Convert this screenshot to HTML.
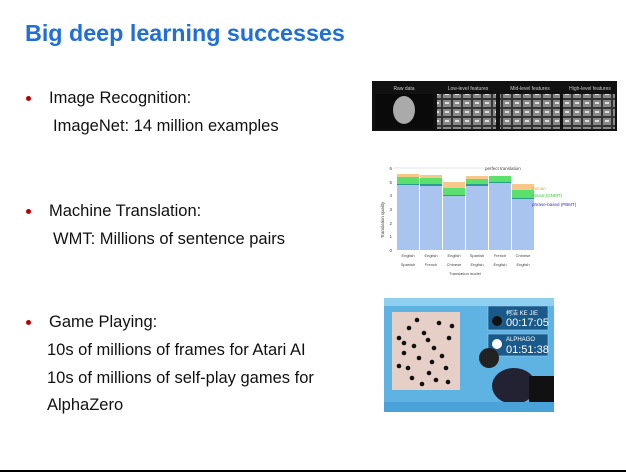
<!DOCTYPE html>
<html><head><style>
body{margin:0;width:626px;height:473px;background:#fff;position:relative;overflow:hidden;font-family:"Liberation Sans",sans-serif}
.t{position:absolute;left:25px;top:20px;font-size:23.3px;font-weight:bold;color:#1e6fd9}
.b{position:absolute;left:26px;width:5px;height:5px;border-radius:50%;background:#c00000}
.x{position:absolute;font-size:16.5px;color:#111;white-space:nowrap}
</style></head><body>
<div class="t">Big deep learning successes</div>
<div class="b" style="top:96px"></div><div class="x" style="left:49px;top:89px">Image Recognition:</div>
<div class="x" style="left:53px;top:117px">ImageNet: 14 million examples</div>
<div class="b" style="top:209px"></div><div class="x" style="left:49px;top:202px">Machine Translation:</div>
<div class="x" style="left:53px;top:230px">WMT: Millions of sentence pairs</div>
<div class="b" style="top:320px"></div><div class="x" style="left:49px;top:313px">Game Playing:</div>
<div class="x" style="left:47px;top:341px">10s of millions of frames for Atari AI</div>
<div class="x" style="left:47px;top:369px">10s of millions of self-play games for</div>
<div class="x" style="left:47px;top:396px">AlphaZero</div>

<svg style="position:absolute;left:372px;top:81px" width="245" height="50">
<defs><pattern id="g" width="10" height="9" patternUnits="userSpaceOnUse"><rect width="10" height="9" fill="#333"/><rect x="1" y="1" width="8" height="7" fill="#888"/><rect x="3" y="3" width="4" height="2" fill="#ddd"/></pattern></defs>
<rect width="245" height="50" fill="#111"/>
<g fill="#ccc" font-size="5" text-anchor="middle"><text x="32" y="9">Raw data</text><text x="96" y="9">Low-level features</text><text x="158" y="9">Mid-level features</text><text x="218" y="9">High-level features</text></g>
<rect x="3" y="13" width="58" height="35" fill="#0a0a0a"/><ellipse cx="32" cy="29" rx="11" ry="14" fill="#aaa"/>
<rect x="65" y="13" width="59" height="35" fill="url(#g)"/><rect x="128" y="13" width="60" height="35" fill="url(#g)"/><rect x="191" y="13" width="52" height="35" fill="url(#g)"/>
</svg>

<svg style="position:absolute;left:372px;top:160px" width="240" height="120" font-size="4.5" fill="#444">
<line x1="22" y1="8" x2="112" y2="8" stroke="#ccc" stroke-width=".5"/>
<text x="113" y="10">perfect translation</text>
<g text-anchor="end"><text x="20" y="10">6</text><text x="20" y="24">5</text><text x="20" y="37">4</text><text x="20" y="51">3</text><text x="20" y="65">2</text><text x="20" y="78">1</text><text x="20" y="92">0</text></g>
<text x="12" y="60" transform="rotate(-90 12 60)" text-anchor="middle">Translation quality</text>
<g>
<rect x="25" y="14" width="22" height="76" fill="#f8c78a"/><rect x="25" y="17" width="22" height="73" fill="#5be06e"/><rect x="25" y="24" width="22" height="66" fill="#2a9d8f"/><rect x="25" y="25" width="22" height="65" fill="#a9c4ef"/>
<rect x="48" y="15" width="22" height="75" fill="#f8c78a"/><rect x="48" y="18" width="22" height="72" fill="#5be06e"/><rect x="48" y="24" width="22" height="66" fill="#2a9d8f"/><rect x="48" y="26" width="22" height="64" fill="#a9c4ef"/>
<rect x="71" y="22" width="22" height="68" fill="#f8c78a"/><rect x="71" y="28" width="22" height="62" fill="#5be06e"/><rect x="71" y="35" width="22" height="55" fill="#2a9d8f"/><rect x="71" y="36" width="22" height="54" fill="#a9c4ef"/>
<rect x="94" y="16" width="22" height="74" fill="#f8c78a"/><rect x="94" y="19" width="22" height="71" fill="#5be06e"/><rect x="94" y="24" width="22" height="66" fill="#2a9d8f"/><rect x="94" y="26" width="22" height="64" fill="#a9c4ef"/>
<rect x="117" y="16" width="22" height="74" fill="#5be06e"/><rect x="117" y="22" width="22" height="68" fill="#2a9d8f"/><rect x="117" y="23" width="22" height="67" fill="#a9c4ef"/>
<rect x="140" y="24" width="22" height="66" fill="#f8c78a"/><rect x="140" y="30" width="22" height="60" fill="#5be06e"/><rect x="140" y="38" width="22" height="52" fill="#2a9d8f"/><rect x="140" y="39" width="22" height="51" fill="#a9c4ef"/>
</g>
<text x="160" y="30" fill="#e8a84a">human</text><text x="160" y="37" fill="#3c3">neural (GNMT)</text><text x="160" y="46" fill="#33c">phrase-based (PBMT)</text>
<g text-anchor="middle" font-size="4"><text x="36" y="97">English</text><text x="36" y="106">Spanish</text><text x="59" y="97">English</text><text x="59" y="106">French</text><text x="82" y="97">English</text><text x="82" y="106">Chinese</text><text x="105" y="97">Spanish</text><text x="105" y="106">English</text><text x="128" y="97">French</text><text x="128" y="106">English</text><text x="151" y="97">Chinese</text><text x="151" y="106">English</text><text x="93" y="115">Translation model</text></g>
</svg>

<svg style="position:absolute;left:384px;top:298px" width="170" height="114">
<rect width="170" height="114" fill="#5fb3e3"/>
<rect x="0" y="0" width="170" height="8" fill="#8fd0f0"/>
<rect x="8" y="14" width="68" height="78" fill="#e6cfc7"/>
<g fill="#111"><circle cx="25" cy="30" r="2.3"/><circle cx="40" cy="35" r="2.3"/><circle cx="55" cy="25" r="2.3"/><circle cx="20" cy="55" r="2.3"/><circle cx="35" cy="60" r="2.3"/><circle cx="50" cy="50" r="2.3"/><circle cx="62" cy="70" r="2.3"/><circle cx="28" cy="80" r="2.3"/><circle cx="45" cy="75" r="2.3"/><circle cx="15" cy="40" r="2.3"/><circle cx="65" cy="40" r="2.3"/><circle cx="20" cy="45" r="2.3"/><circle cx="30" cy="48" r="2.3"/><circle cx="44" cy="42" r="2.3"/><circle cx="58" cy="58" r="2.3"/><circle cx="68" cy="28" r="2.3"/><circle cx="15" cy="68" r="2.3"/><circle cx="24" cy="70" r="2.3"/><circle cx="38" cy="86" r="2.3"/><circle cx="52" cy="82" r="2.3"/><circle cx="64" cy="84" r="2.3"/><circle cx="48" cy="64" r="2.3"/><circle cx="33" cy="22" r="2.3"/></g>
<rect x="104" y="8" width="60" height="24" fill="#1a5a8a" stroke="#9ce" stroke-width=".6"/>
<rect x="104" y="36" width="60" height="22" fill="#1a5a8a" stroke="#9ce" stroke-width=".6"/>
<circle cx="113" cy="23" r="5" fill="#111"/><circle cx="113" cy="46" r="5" fill="#fff"/>
<text x="122" y="17" font-size="6" fill="#fff">柯洁 KE JIE</text><text x="122" y="28" font-size="11" fill="#fff">00:17:05</text>
<text x="122" y="43" font-size="6" fill="#fff">ALPHAGO</text><text x="122" y="55" font-size="11" fill="#fff">01:51:38</text>
<ellipse cx="130" cy="88" rx="22" ry="18" fill="#223"/><rect x="145" y="78" width="25" height="36" fill="#111"/><circle cx="105" cy="60" r="10" fill="#222"/>
<rect x="0" y="104" width="170" height="10" fill="#4aa3d8"/>
</svg>
<div style="position:absolute;left:0;top:470px;width:626px;height:2px;background:#000"></div>
</body></html>
